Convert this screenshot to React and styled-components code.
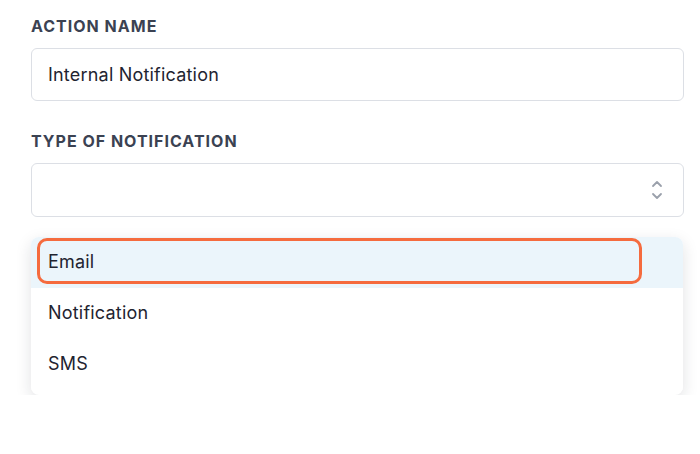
import React from 'react'
import styled, { createGlobalStyle } from 'styled-components'

const Global = createGlobalStyle`
body{
margin:0;
background:#fff;
font-family:Inter, "Noto Sans", sans-serif;
}
`
const Wrapper = styled.div`
padding:16px 16px 0 31px;
display:flex;
flex-direction:column;
`
const Label = styled.div`
font-size:16px;
line-height:20px;
font-weight:700;
letter-spacing:1px;
color:#3b4252;
margin-top:${p => p.$first ? '0' : '30px'};
margin-bottom:12px;
`
const Input = styled.div`
height:51px;
border:1px solid #dcdfe5;
border-radius:6px;
display:flex;
align-items:center;
padding:0 16px;
font-size:18px;
letter-spacing:0.2px;
color:#1f2430;
`
const Select = styled(Input)`
height:52px;
justify-content:flex-end;
padding:0 20px;
`
const Menu = styled.div`
margin-top:20px;
width:652px;
border-radius:8px;
background:#fff;
box-shadow:0 5px 16px rgba(20,30,50,0.13);
padding-bottom:5px;
overflow:hidden;
`
const Option = styled.div`
height:51px;
box-sizing:border-box;
padding:1px 41px 4px 6px;
background:${p => p.$active ? '#ebf5fb' : '#fff'};
display:flex;
`
const OptionText = styled.div`
flex:1;
display:flex;
align-items:center;
padding-left:8px;
border:3px solid ${p => p.$active ? '#f56b3e' : 'transparent'};
border-radius:10px;
font-size:18px;
letter-spacing:0.2px;
color:#1f2430;
`

const Chevrons = () => (
    <svg width="12" height="20" viewBox="0 0 12 20" fill="none" stroke="#9aa0ab" strokeWidth="1.8" strokeLinecap="round" strokeLinejoin="round">
        <path d="M2 6 L6 2 L10 6" />
        <path d="M2 14 L6 18 L10 14" />
    </svg>
)

const options = ['Email', 'Notification', 'SMS']

const App = () => {
    return (
        <Wrapper>
            <Global />
            <Label $first>ACTION NAME</Label>
            <Input>Internal Notification</Input>
            <Label>TYPE OF NOTIFICATION</Label>
            <Select><Chevrons /></Select>
            <Menu>
                {options.map((o, i) => (
                    <Option key={o} $active={i === 0}>
                        <OptionText $active={i === 0}>{o}</OptionText>
                    </Option>
                ))}
            </Menu>
        </Wrapper>
    )
}

export default App
